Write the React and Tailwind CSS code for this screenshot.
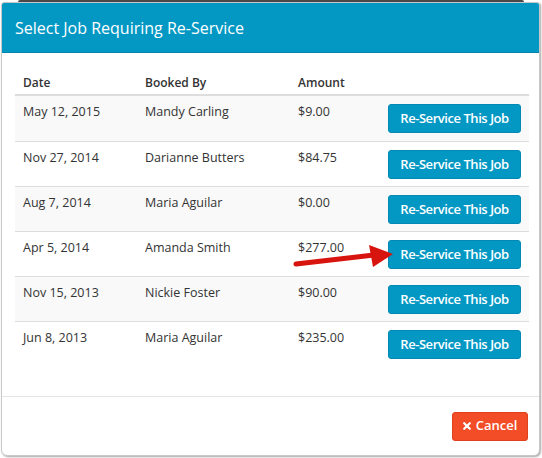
const jobs = [
  { date: "May 12, 2015", bookedBy: "Mandy Carling", amount: "$9.00" },
  { date: "Nov 27, 2014", bookedBy: "Darianne Butters", amount: "$84.75" },
  { date: "Aug 7, 2014", bookedBy: "Maria Aguilar", amount: "$0.00" },
  { date: "Apr 5, 2014", bookedBy: "Amanda Smith", amount: "$277.00", pointer: true },
  { date: "Nov 15, 2013", bookedBy: "Nickie Foster", amount: "$90.00" },
  { date: "Jun 8, 2013", bookedBy: "Maria Aguilar", amount: "$235.00" },
];

const cols = "grid grid-cols-[122px_153px_89px_1fr]";

function Arrow() {
  return (
    <svg
      className="absolute left-[-100px] top-[-5px] z-10 pointer-events-none"
      width="110"
      height="40"
      viewBox="0 0 110 40"
    >
      <path d="M8 29 L86 20" stroke="#d8140e" strokeWidth="5" strokeLinecap="round" />
      <path d="M81 10 L105 19 L85 32 Z" fill="#d8140e" />
    </svg>
  );
}

export default function App() {
  return (
    <div className="w-[542px] h-[458px] bg-white font-['Open_Sans',sans-serif] overflow-hidden">
      {/* dark strip of the page behind the modal */}
      <div className="h-[2px] mx-[18px] bg-[#4a4a4a] rounded-t" />

      <div className="ml-[1px] w-[539px] h-[454px] flex flex-col bg-white border border-[#c8c8c8] rounded-b-[6px] rounded-t-[3px] shadow-[1px_1px_2px_rgba(0,0,0,0.35)] overflow-hidden">
        {/* --- Header --- */}
        <div className="h-[50px] bg-[#0398c4] border-b border-[#0287b0] flex items-center px-[13px]">
          <h4 className="text-white text-[16px] leading-none">
            Select Job Requiring Re-Service
          </h4>
        </div>

        {/* --- Jobs table --- */}
        <div className="flex-1 pl-[13px] pr-[10px] pt-[15px]">
          <div className={`${cols} h-[28px] border-b-2 border-[#dddddd] text-[12px] font-semibold text-[#333]`}>
            <div className="px-2 pt-[6px]">Date</div>
            <div className="px-2 pt-[6px]">Booked By</div>
            <div className="px-2 pt-[6px]">Amount</div>
            <div />
          </div>

          {jobs.map((job, i) => (
            <div
              key={i}
              className={`${cols} h-[45px] text-[12.5px] text-[#333] ${i > 0 ? "border-t border-[#dddddd]" : ""} ${
                i % 2 === 0 ? "bg-[#f9f9f9]" : "bg-white"
              }`}
            >
              <div className="px-2 pt-[7px]">{job.date}</div>
              <div className="px-2 pt-[7px]">{job.bookedBy}</div>
              <div className="px-2 pt-[7px]">{job.amount}</div>
              <div className="flex justify-end items-start pt-[8px] pr-[8px]">
                <div className="relative">
                  {job.pointer && <Arrow />}
                  <button className="h-[29px] w-[133px] rounded-[3px] bg-[#0398c4] border border-[#0389b3] text-white text-[13px] font-semibold tracking-[-0.45px]">
                    Re-Service This Job
                  </button>
                </div>
              </div>
            </div>
          ))}
        </div>

        {/* --- Footer --- */}
        <div className="h-[59px] border-t border-[#e5e5e5] flex items-center justify-end pr-[11px]">
          <button className="h-[29px] w-[76px] rounded-[3px] bg-[#f24d26] border border-[#e0401b] text-white text-[13px] font-semibold flex items-center justify-center gap-[5px]">
            <svg width="8" height="8" viewBox="0 0 8 8">
              <path d="M1.2 1.2 L6.8 6.8 M6.8 1.2 L1.2 6.8" stroke="white" strokeWidth="2.2" strokeLinecap="round" />
            </svg>
            Cancel
          </button>
        </div>
      </div>
    </div>
  );
}
